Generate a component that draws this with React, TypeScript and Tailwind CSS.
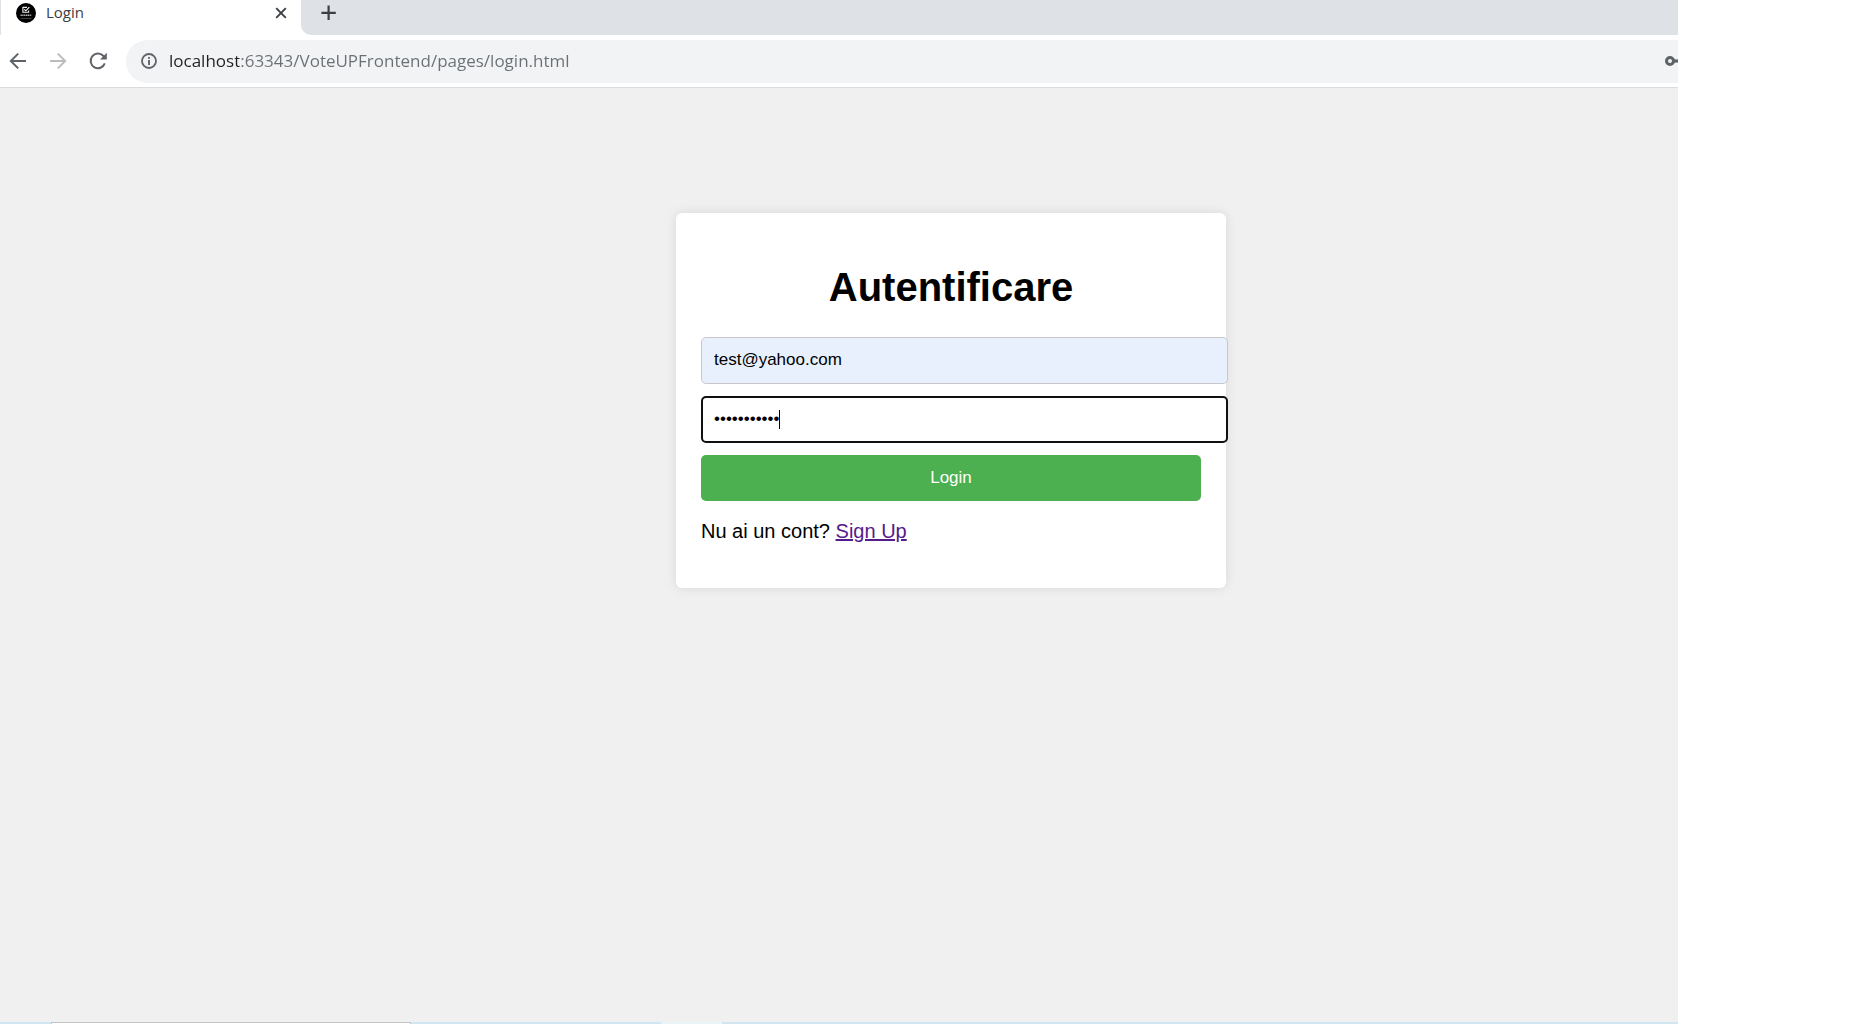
import React, { useState } from "react";

function Favicon() {
  return (
    <svg width="20" height="20" viewBox="0 0 20 20" fill="none" aria-hidden="true" className="shrink-0">
      <circle cx="10" cy="10" r="10" fill="#000" />
      <path d="M12.6 7.4V9.3H6.9V4.4H11" stroke="#eee" strokeWidth="1.1" />
      <path d="M8.3 6.3L9.9 7.8L13.3 4.2" stroke="#fff" strokeWidth="1.1" />
      <path d="M4.5 12.3H15.5" stroke="#bbb" strokeWidth="1.6" strokeDasharray="1.3 0.5" />
      <path d="M4.5 15.4H15.5" stroke="#555" strokeWidth="0.8" />
    </svg>
  );
}

function CloseIcon() {
  return (
    <svg width="12" height="12" viewBox="0 0 12 12" fill="none" stroke="#3c4043" strokeWidth="1.9" aria-hidden="true">
      <path d="M1.2 1.2L10.8 10.8M10.8 1.2L1.2 10.8" />
    </svg>
  );
}

function PlusIcon() {
  return (
    <svg width="16" height="16" viewBox="0 0 16 16" fill="none" stroke="#3c4043" strokeWidth="2.2" aria-hidden="true">
      <path d="M7.6 0.6V15M0.4 7.8H14.8" />
    </svg>
  );
}

function ArrowIcon({ forward = false }: { forward?: boolean }) {
  return (
    <svg width="18" height="18" viewBox="0 0 18 18" fill="none" stroke={forward ? "#babcbe" : "#5f6368"} strokeWidth="2" aria-hidden="true">
      <path d={forward ? "M1 9H16M8.8 1.6L16.2 9L8.8 16.4" : "M17 9H2M9.2 1.6L1.8 9L9.2 16.4"} />
    </svg>
  );
}

function ReloadIcon() {
  return (
    <svg width="18" height="18" viewBox="0 0 18 18" fill="none" aria-hidden="true">
      <path d="M15.8 11.4A7.3 7.3 0 1 1 14.2 3.8L16 5.8" stroke="#5f6368" strokeWidth="2" />
      <path d="M17.8 0.8V7.6H11Z" fill="#5f6368" />
    </svg>
  );
}

function InfoIcon() {
  return (
    <svg width="16" height="16" viewBox="0 0 16 16" fill="none" aria-hidden="true">
      <circle cx="8" cy="8" r="7" stroke="#5f6368" strokeWidth="1.8" />
      <path d="M8 7V12M8 4V5.8" stroke="#5f6368" strokeWidth="1.9" />
    </svg>
  );
}

function KeyIcon() {
  return (
    <svg width="14" height="12" viewBox="0 0 14 12" fill="none" stroke="#5f6368" aria-hidden="true">
      <circle cx="6" cy="6" r="3.5" strokeWidth="3" />
      <path d="M9.5 6H14" strokeWidth="3.2" />
    </svg>
  );
}

function TabStrip() {
  return (
    <div className="flex h-[35px] bg-[#dee1e6] pl-px">
      <div className="flex w-[300px] items-start justify-between bg-white pl-[15px] pr-3.5">
        <div className="flex items-start gap-2.5 pt-[3px]">
          <Favicon />
          <span className="text-[15px] leading-[18px] text-[#3c4043]">Login</span>
        </div>
        <button type="button" aria-label="Close tab" className="mt-[7px]">
          <CloseIcon />
        </button>
      </div>
      <div className="flex-1 bg-white">
        <div className="flex h-full items-start rounded-bl-[10px] bg-[#dee1e6] pl-5 pt-[5px]">
          <button type="button" aria-label="New tab">
            <PlusIcon />
          </button>
        </div>
      </div>
    </div>
  );
}

function Toolbar() {
  const [url, setUrl] = useState("localhost:63343/VoteUPFrontend/pages/login.html");
  return (
    <div className="flex h-[53px] items-center border-b border-[#dadce0] bg-white pl-[9px]">
      <div className="flex items-center gap-[22px]">
        <button type="button" aria-label="Back"><ArrowIcon /></button>
        <button type="button" aria-label="Forward"><ArrowIcon forward /></button>
        <button type="button" aria-label="Reload"><ReloadIcon /></button>
      </div>
      <div className="ml-[19px] flex h-[43px] flex-1 items-center rounded-l-full bg-[#f1f3f4] pl-[15px]">
        <button type="button" aria-label="Site information"><InfoIcon /></button>
        <input
          aria-label="Address"
          value={url}
          onChange={(e) => setUrl(e.target.value)}
          className="ml-3 min-w-0 flex-1 bg-[linear-gradient(90deg,#202124_70px,#6b6f74_70px)] bg-clip-text text-[17px] leading-6 text-transparent outline-none"
        />
        <button type="button" aria-label="Saved passwords"><KeyIcon /></button>
      </div>
    </div>
  );
}

function LoginCard() {
  const [email, setEmail] = useState("test@yahoo.com");
  const [password, setPassword] = useState("parola12345");
  return (
    <section className="w-[550px] rounded-md bg-white px-[25px] pb-[45px] pt-[50px] font-['Liberation_Sans',Arial,sans-serif] shadow-[0_0_12px_rgba(0,0,0,0.1)]">
      <h1 className="text-center text-[40px] font-bold leading-[48px] text-black">Autentificare</h1>
      <form className="mt-[26px] flex flex-col gap-3" onSubmit={(e) => e.preventDefault()}>
        <input
          type="email"
          aria-label="Email"
          value={email}
          onChange={(e) => setEmail(e.target.value)}
          className="-mr-[27px] h-[47px] rounded-[5px] border border-[#c8c8cc] bg-[#e8f0fe] px-3 pb-0.5 text-[17px] text-black outline-none"
        />
        <div className="relative -mr-[27px] flex">
          <input
            type="password"
            aria-label="Parola"
            value={password}
            onChange={(e) => setPassword(e.target.value)}
            className="h-[47px] w-full rounded-[5px] border-2 border-[#101010] bg-white px-[11px] pb-0.5 text-[17px] text-black outline-none"
          />
          <span className="absolute left-[78px] top-3.5 h-[19px] w-px bg-black" />
        </div>
        <button type="submit" className="h-[46px] rounded-[5px] bg-[#4caf50] text-[17px] text-white">
          Login
        </button>
      </form>
      <p className="mt-[18px] text-[20px] leading-6 text-black">
        Nu ai un cont?{" "}
        <a href="#signup" className="text-[#551a8b] underline">Sign Up</a>
      </p>
    </section>
  );
}

export default function App() {
  return (
    <div className="min-h-screen bg-white pr-[196px] font-['Open_Sans','Noto_Sans',sans-serif]">
      <div className="flex min-h-screen flex-col overflow-hidden bg-[#f0f0f0]">
        <header>
          <TabStrip />
          <Toolbar />
        </header>
        <main className="flex flex-1 items-start justify-center pl-56 pt-[125px]">
          <LoginCard />
        </main>
        <footer className="flex h-0.5 bg-[#d2e6f1]">
          <div className="ml-[51px] w-[360px] border-x border-t border-[#c4c4c4] bg-white" />
          <div className="ml-[250px] w-[61px] bg-[#e9f4f8]" />
        </footer>
      </div>
    </div>
  );
}
